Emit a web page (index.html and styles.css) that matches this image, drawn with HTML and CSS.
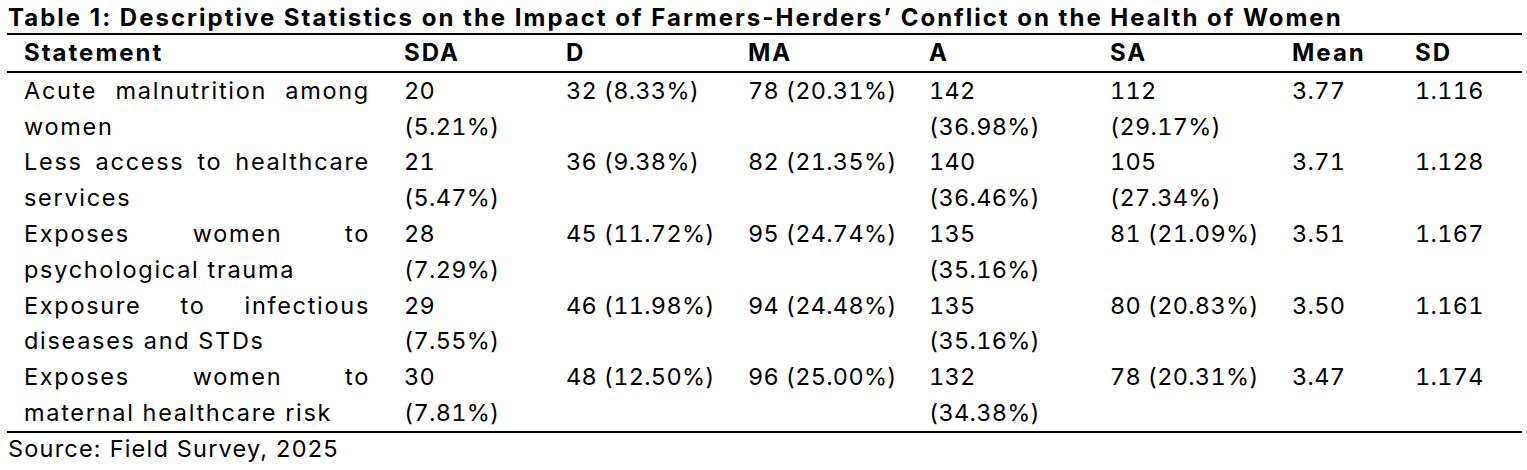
FILE: index.html
```html
<!DOCTYPE html>
<html lang="en">
<head>
<meta charset="utf-8">
<title>Table 1</title>
<link rel="stylesheet" href="styles.css">
</head>
<body>
<h1 class="title">Table 1: Descriptive Statistics on the Impact of Farmers-Herders’ Conflict on the Health of Women</h1>
<table class="stats">
  <colgroup>
    <col class="c-stmt"><col class="c-sda"><col class="c-d"><col class="c-ma"><col class="c-a"><col class="c-sa"><col class="c-mean"><col class="c-sd">
  </colgroup>
  <thead>
    <tr><th>Statement</th><th>SDA</th><th>D</th><th>MA</th><th>A</th><th>SA</th><th>Mean</th><th>SD</th></tr>
  </thead>
  <tbody>
    <tr>
      <td class="stmt"><span class="just">Acute malnutrition among</span>women</td>
      <td>20<br>(5.21%)</td><td>32 (8.33%)</td><td>78 (20.31%)</td><td>142<br>(36.98%)</td><td>112<br>(29.17%)</td><td>3.77</td><td>1.116</td>
    </tr>
    <tr>
      <td class="stmt"><span class="just">Less access to healthcare</span>services</td>
      <td>21<br>(5.47%)</td><td>36 (9.38%)</td><td>82 (21.35%)</td><td>140<br>(36.46%)</td><td>105<br>(27.34%)</td><td>3.71</td><td>1.128</td>
    </tr>
    <tr>
      <td class="stmt"><span class="just">Exposes women to</span>psychological trauma</td>
      <td>28<br>(7.29%)</td><td>45 (11.72%)</td><td>95 (24.74%)</td><td>135<br>(35.16%)</td><td>81 (21.09%)</td><td>3.51</td><td>1.167</td>
    </tr>
    <tr>
      <td class="stmt"><span class="just">Exposure to infectious</span>diseases and STDs</td>
      <td>29<br>(7.55%)</td><td>46 (11.98%)</td><td>94 (24.48%)</td><td>135<br>(35.16%)</td><td>80 (20.83%)</td><td>3.50</td><td>1.161</td>
    </tr>
    <tr>
      <td class="stmt"><span class="just">Exposes women to</span>maternal healthcare risk</td>
      <td>30<br>(7.81%)</td><td>48 (12.50%)</td><td>96 (25.00%)</td><td>132<br>(34.38%)</td><td>78 (20.31%)</td><td>3.47</td><td>1.174</td>
    </tr>
  </tbody>
</table>
<p class="source">Source: Field Survey, 2025</p>
</body>
</html>
```

FILE: styles.css
```css
html, body {
  margin: 0;
  padding: 0;
  background: #fff;
  color: #000;
}
body {
  font-family: Inter, "Liberation Sans", sans-serif;
  font-size: 23.5px;
  letter-spacing: 1.2px;
}
.title {
  margin: 0;
  padding: 4px 0 0 8px;
  height: 29px;
  font-size: 24px;
  font-weight: 700;
  letter-spacing: 2px;
  line-height: 28px;
  white-space: nowrap;
}
.stats {
  margin: 0 0 0 7px;
  width: 1515px;
  table-layout: fixed;
  border-collapse: collapse;
  border-top: 2px solid #000;
  border-bottom: 2px solid #000;
}
.c-stmt { width: 380px; }
.c-sda { width: 162px; }
.c-d { width: 182px; }
.c-ma { width: 181px; }
.c-a { width: 181px; }
.c-sa { width: 182px; }
.c-mean { width: 123px; }
.c-sd { width: 124px; }
.stats th,
.stats td {
  padding: 0 0 0 17px;
  text-align: left;
  vertical-align: top;
  line-height: 35.8px;
  white-space: nowrap;
}
.stats td {
  font-variant-numeric: tabular-nums;
  letter-spacing: 0.3px;
}
.stats th {
  font-size: 24px;
  font-weight: 700;
  letter-spacing: 2px;
  border-bottom: 2px solid #000;
}
.stats td.stmt {
  white-space: normal;
  padding-right: 17px;
  letter-spacing: 1.7px;
}
.just {
  display: block;
  text-align: justify;
  text-align-last: justify;
}
.source {
  margin: 0;
  padding: 2px 0 0 8px;
  line-height: 28px;
}
```
